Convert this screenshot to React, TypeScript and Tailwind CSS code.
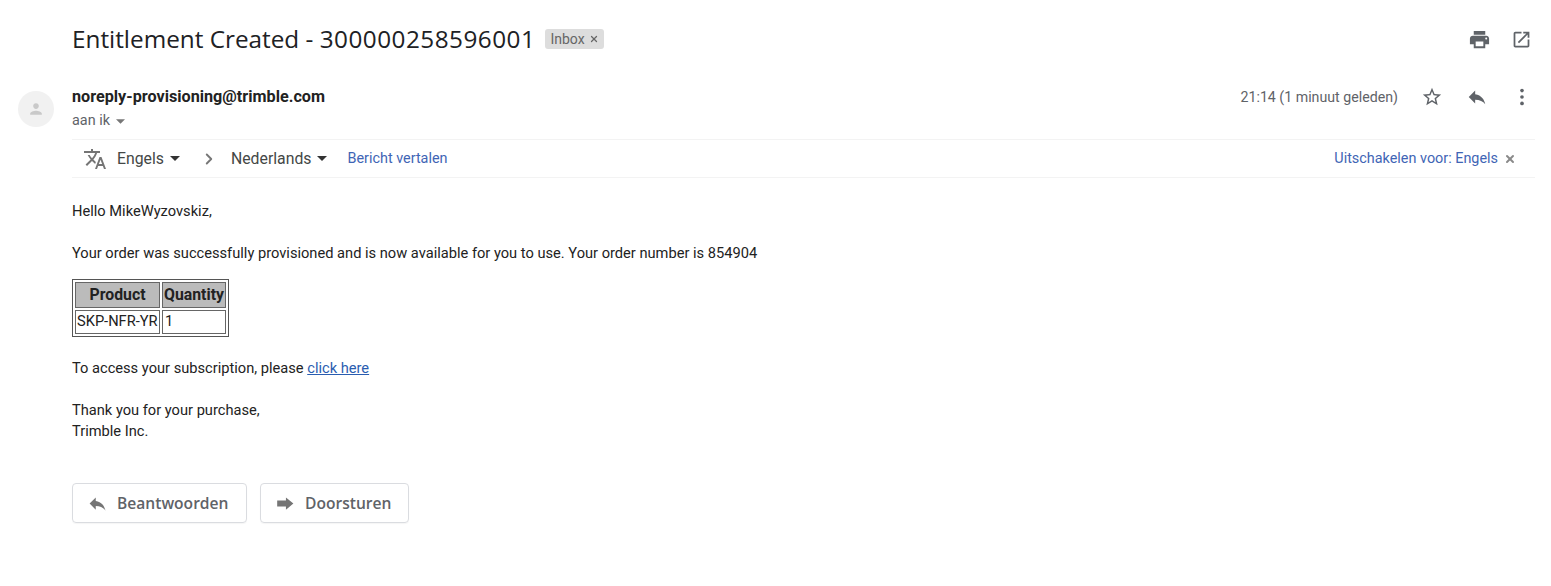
import { ChevronRight, X } from 'lucide-react'

const ReplyIcon = ({ className }: { className: string }) => (
  <svg viewBox="0 0 24 24" className={className} fill="currentColor">
    <path d="M10 9V5l-7 7 7 7v-4.1c5 0 8.5 1.6 11 5.1-1-5-4-10-11-11z" />
  </svg>
)

const Caret = ({ className }: { className: string }) => (
  <svg viewBox="0 0 10 5" className={className} fill="currentColor">
    <path d="M0 0h10L5 5z" />
  </svg>
)

export default function App() {
  return (
    <div className="w-[1551px] h-[586px] bg-white overflow-hidden font-['Roboto',sans-serif] text-[#222222]">
      {/* Subject */}
      <div className="flex items-center pl-[72px] pr-[19px] h-[78px]">
        <h1 className="font-['Open_Sans',sans-serif] text-[24.3px] leading-[30px] text-[#202124]">
          Entitlement Created - <span className="tracking-[0.49px]">300000258596001</span>
        </h1>
        <span className="ml-[10px] flex items-center h-[20px] w-[59px] pl-[5px] rounded-[3px] bg-[#dddddd] text-[14px] text-[#666666]">
          Inbox
          <X className="ml-[4px] h-[10px] w-[10px]" strokeWidth={3} />
        </span>
        <div className="ml-auto flex items-center gap-[20px] text-[#5f6368]">
          <svg viewBox="0 0 24 24" className="h-[23px] w-[23px]" fill="currentColor">
            <path d="M19 8H5c-1.66 0-3 1.34-3 3v6h4v4h12v-4h4v-6c0-1.66-1.34-3-3-3zm-3 11H8v-5h8v5zm3-7c-.55 0-1-.45-1-1s.45-1 1-1 1 .45 1 1-.45 1-1 1zm-1-9H6v4h12V3z" />
          </svg>
          <svg viewBox="0 0 24 24" className="h-[21px] w-[21px]" fill="currentColor">
            <path d="M19 19H5V5h7V3H5c-1.11 0-2 .9-2 2v14c0 1.1.89 2 2 2h14c1.1 0 2-.9 2-2v-7h-2v7zM14 3v2h3.59l-9.83 9.83 1.41 1.41L19 6.41V10h2V3h-7z" />
          </svg>
        </div>
      </div>

      {/* Sender row */}
      <div className="flex pl-[18px] pr-[16px]">
        <div className="mt-[13px] flex h-[36px] w-[36px] items-center justify-center rounded-full bg-[#f1f1f1] text-[#c9c9c9]">
          <svg viewBox="0 0 24 24" className="h-[20px] w-[20px]" fill="currentColor">
            <path d="M12 12c2 0 3.4-1.6 3.4-3.5S14 5 12 5 8.600 6.600 8.600 8.500 10 12 12 12zm0 2c-2.700 0-7 1.300-7 3.500V19h14v-1.500c0-2.200-4.300-3.500-7-3.500z" />
          </svg>
        </div>
        <div className="ml-[18px] flex-1">
          <div className="flex items-start">
            <div>
              <div className="mt-[9px] text-[16.2px] leading-[20px] font-bold text-[#222222]">
                noreply-provisioning@trimble.com
              </div>
              <div className="mt-[4px] flex items-center text-[14.4px] leading-[20px] text-[#5f6368]">
                aan ik
                <Caret className="ml-[6px] h-[5px] w-[9px] text-[#777777]" />
              </div>
            </div>
            <div className="ml-auto mt-[8px] flex items-center text-[#5f6368] pr-[2px]">
              <span className="text-[14.2px] leading-[20px] mr-[23px]">21:14 (1 minuut geleden)</span>
              <svg viewBox="0 0 24 24" className="h-[22px] w-[22px] mr-[23px]" fill="currentColor">
                <path d="M22 9.240l-7.190-.62L12 2 9.190 8.630 2 9.240l5.460 4.730L5.820 21 12 17.270 18.180 21l-1.630-7.030L22 9.240zM12 15.400l-3.760 2.270 1-4.280-3.320-2.880 4.380-.38L12 6.100l1.710 4.040 4.380.38-3.320 2.880 1 4.280L12 15.400z" />
              </svg>
              <ReplyIcon className="h-[22px] w-[22px] mr-[23px]" />
              <svg viewBox="0 0 24 24" className="h-[22px] w-[22px]" fill="currentColor">
                <circle cx="12" cy="5" r="2" />
                <circle cx="12" cy="12" r="2" />
                <circle cx="12" cy="19" r="2" />
              </svg>
            </div>
          </div>

          {/* Translate bar */}
          <div className="mt-[8px] flex h-[39px] items-center border-y border-[#f3f3f3] pl-[11px] pr-[19px] text-[#5f6368]">
            <svg viewBox="0 0 24 24" className="h-[24px] w-[24px] text-[#757575]" fill="currentColor">
              <path d="M12.870 15.070l-2.540-2.510.03-.03c1.740-1.940 2.980-4.170 3.710-6.530H17V4h-7V2H8v2H1v1.990h11.170C11.500 7.920 10.440 9.750 9 11.350 8.070 10.320 7.300 9.190 6.690 8h-2c.73 1.630 1.730 3.170 2.980 4.560l-5.090 5.020L4 19l5-5 3.110 3.110.76-2.040zM18.500 10h-2L12 22h2l1.120-3h4.750L21 22h2l-4.500-12zm-2.620 7l1.620-4.330L19.120 17h-3.240z" />
            </svg>
            <span className="ml-[10px] text-[15.8px] text-[#444746]">Engels</span>
            <Caret className="ml-[6px] h-[5px] w-[10px] text-[#333333]" />
            <ChevronRight className="ml-[20px] h-[18px] w-[18px] text-[#777777]" strokeWidth={2.5} />
            <span className="ml-[13px] text-[15.8px] text-[#444746]">Nederlands</span>
            <Caret className="ml-[6px] h-[5px] w-[10px] text-[#333333]" />
            <span className="ml-[20px] text-[14.4px] text-[#3f65b5]">Bericht vertalen</span>
            <span className="ml-auto text-[14.4px] text-[#3f65b5]">Uitschakelen voor: Engels</span>
            <X className="ml-[6px] h-[12px] w-[12px] text-[#8a8a8a]" strokeWidth={4} />
          </div>
        </div>
      </div>

      {/* Body */}
      <div className="pl-[72px] pt-[23px] text-[14.65px] leading-[21px] text-[#222222]">
        <p>Hello MikeWyzovskiz,</p>
        <p className="mt-[21px]">
          Your order was successfully provisioned and is now available for you to use. Your order number is 854904
        </p>
        <table className="mt-[15px] border-separate border-spacing-[2px] border border-[#555555]">
          <thead>
            <tr>
              <th className="w-[85px] h-[26px] border border-[#666666] bg-[#bbbbbb] px-px pb-[2px] text-[15.8px] font-bold">Product</th>
              <th className="w-[64px] h-[26px] border border-[#666666] bg-[#bbbbbb] px-px pb-[2px] text-[15.8px] font-bold">Quantity</th>
            </tr>
          </thead>
          <tbody>
            <tr>
              <td className="h-[24px] border border-[#666666] px-px pb-px">SKP-NFR-YR</td>
              <td className="h-[24px] border border-[#666666] px-[2px] pb-px">1</td>
            </tr>
          </tbody>
        </table>
        <p className="mt-[21px]">
          To access your subscription, please <a className="text-[#2a5db0] underline">click here</a>
        </p>
        <p className="mt-[21px]">
          Thank you for your purchase,
          <br />
          Trimble Inc.
        </p>

        {/* Actions */}
        <div className="mt-[41px] flex gap-[13px]">
          <button className="flex h-[40px] w-[175px] items-center rounded-[4px] border border-[#dadce0] pl-[14px] text-[#5f6368] shadow-[0_1px_1px_rgba(0,0,0,0.04)]">
            <ReplyIcon className="h-[21px] w-[21px] text-[#757575]" />
            <span className="ml-[9px] font-['Open_Sans',sans-serif] text-[15.6px] font-semibold">Beantwoorden</span>
          </button>
          <button className="flex h-[40px] w-[149px] items-center rounded-[4px] border border-[#dadce0] pl-[14px] text-[#5f6368] shadow-[0_1px_1px_rgba(0,0,0,0.04)]">
            <svg viewBox="0 0 24 24" className="h-[21px] w-[21px] text-[#757575]" fill="currentColor">
              <path d="M12.500 5l8.500 7-8.500 7v-3.500H2.500V8.500h10z" />
            </svg>
            <span className="ml-[9px] font-['Open_Sans',sans-serif] text-[15.6px] font-semibold">Doorsturen</span>
          </button>
        </div>
      </div>
    </div>
  )
}
